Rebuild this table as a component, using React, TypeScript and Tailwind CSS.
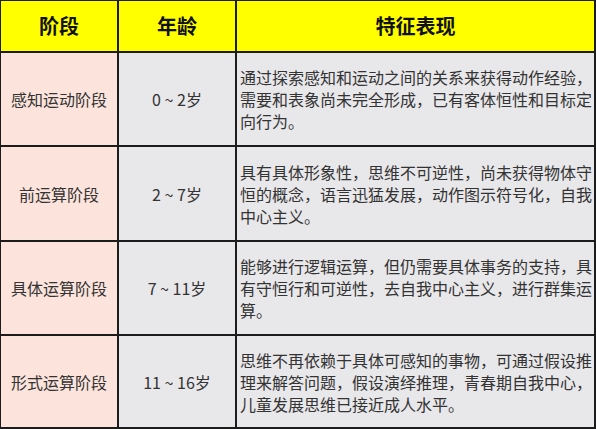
import React from "react";

interface Stage {
  name: string;
  age: string;
  lines: string[];
}

const stages: Stage[] = [
  {
    name: "感知运动阶段",
    age: "0 ~ 2岁",
    lines: [
      "通过探索感知和运动之间的关系来获得动作经验，",
      "需要和表象尚未完全形成，已有客体恒性和目标定",
      "向行为。",
    ],
  },
  {
    name: "前运算阶段",
    age: "2 ~ 7岁",
    lines: [
      "具有具体形象性，思维不可逆性，尚未获得物体守",
      "恒的概念，语言迅猛发展，动作图示符号化，自我",
      "中心主义。",
    ],
  },
  {
    name: "具体运算阶段",
    age: "7 ~ 11岁",
    lines: [
      "能够进行逻辑运算，但仍需要具体事务的支持，具",
      "有守恒行和可逆性，去自我中心主义，进行群集运",
      "算。",
    ],
  },
  {
    name: "形式运算阶段",
    age: "11 ~ 16岁",
    lines: [
      "思维不再依赖于具体可感知的事物，可通过假设推",
      "理来解答问题，假设演绎推理，青春期自我中心，",
      "儿童发展思维已接近成人水平。",
    ],
  },
];

const font = { fontFamily: '"Noto Sans CJK SC", "Noto Sans", sans-serif' };

const App = () => {
  return (
    <div
      style={font}
      className="w-[596px] h-[429px] bg-[#1c1c1c] pt-[1px] pl-[1px] pr-[2px] pb-[2px] grid grid-cols-[116px_116px_1fr] grid-rows-[50px_92px_93px_92px_1fr] gap-[2px]"
    >
      <div className="bg-[#ffff00] flex items-center justify-center text-[20px] font-bold text-[#111]">阶段</div>
      <div className="bg-[#ffff00] flex items-center justify-center text-[20px] font-bold text-[#111]">年龄</div>
      <div className="bg-[#ffff00] flex items-center justify-center text-[20px] font-bold text-[#111]">特征表现</div>

      {stages.map((s) => (
        <React.Fragment key={s.name}>
          <div className="bg-[#fce4dc] flex items-center justify-center text-[16px] text-[#333]">{s.name}</div>
          <div className="bg-[#e8e7ea] flex items-center justify-center text-[16px] text-[#333]">{s.age}</div>
          <div className="bg-[#e8e7ea] flex flex-col justify-center pl-[3px] text-[16px] leading-[22px] text-[#333]">
            {s.lines.map((line, i) => (
              <div key={i} className="whitespace-nowrap">
                {line}
              </div>
            ))}
          </div>
        </React.Fragment>
      ))}
    </div>
  );
};

export default App;
